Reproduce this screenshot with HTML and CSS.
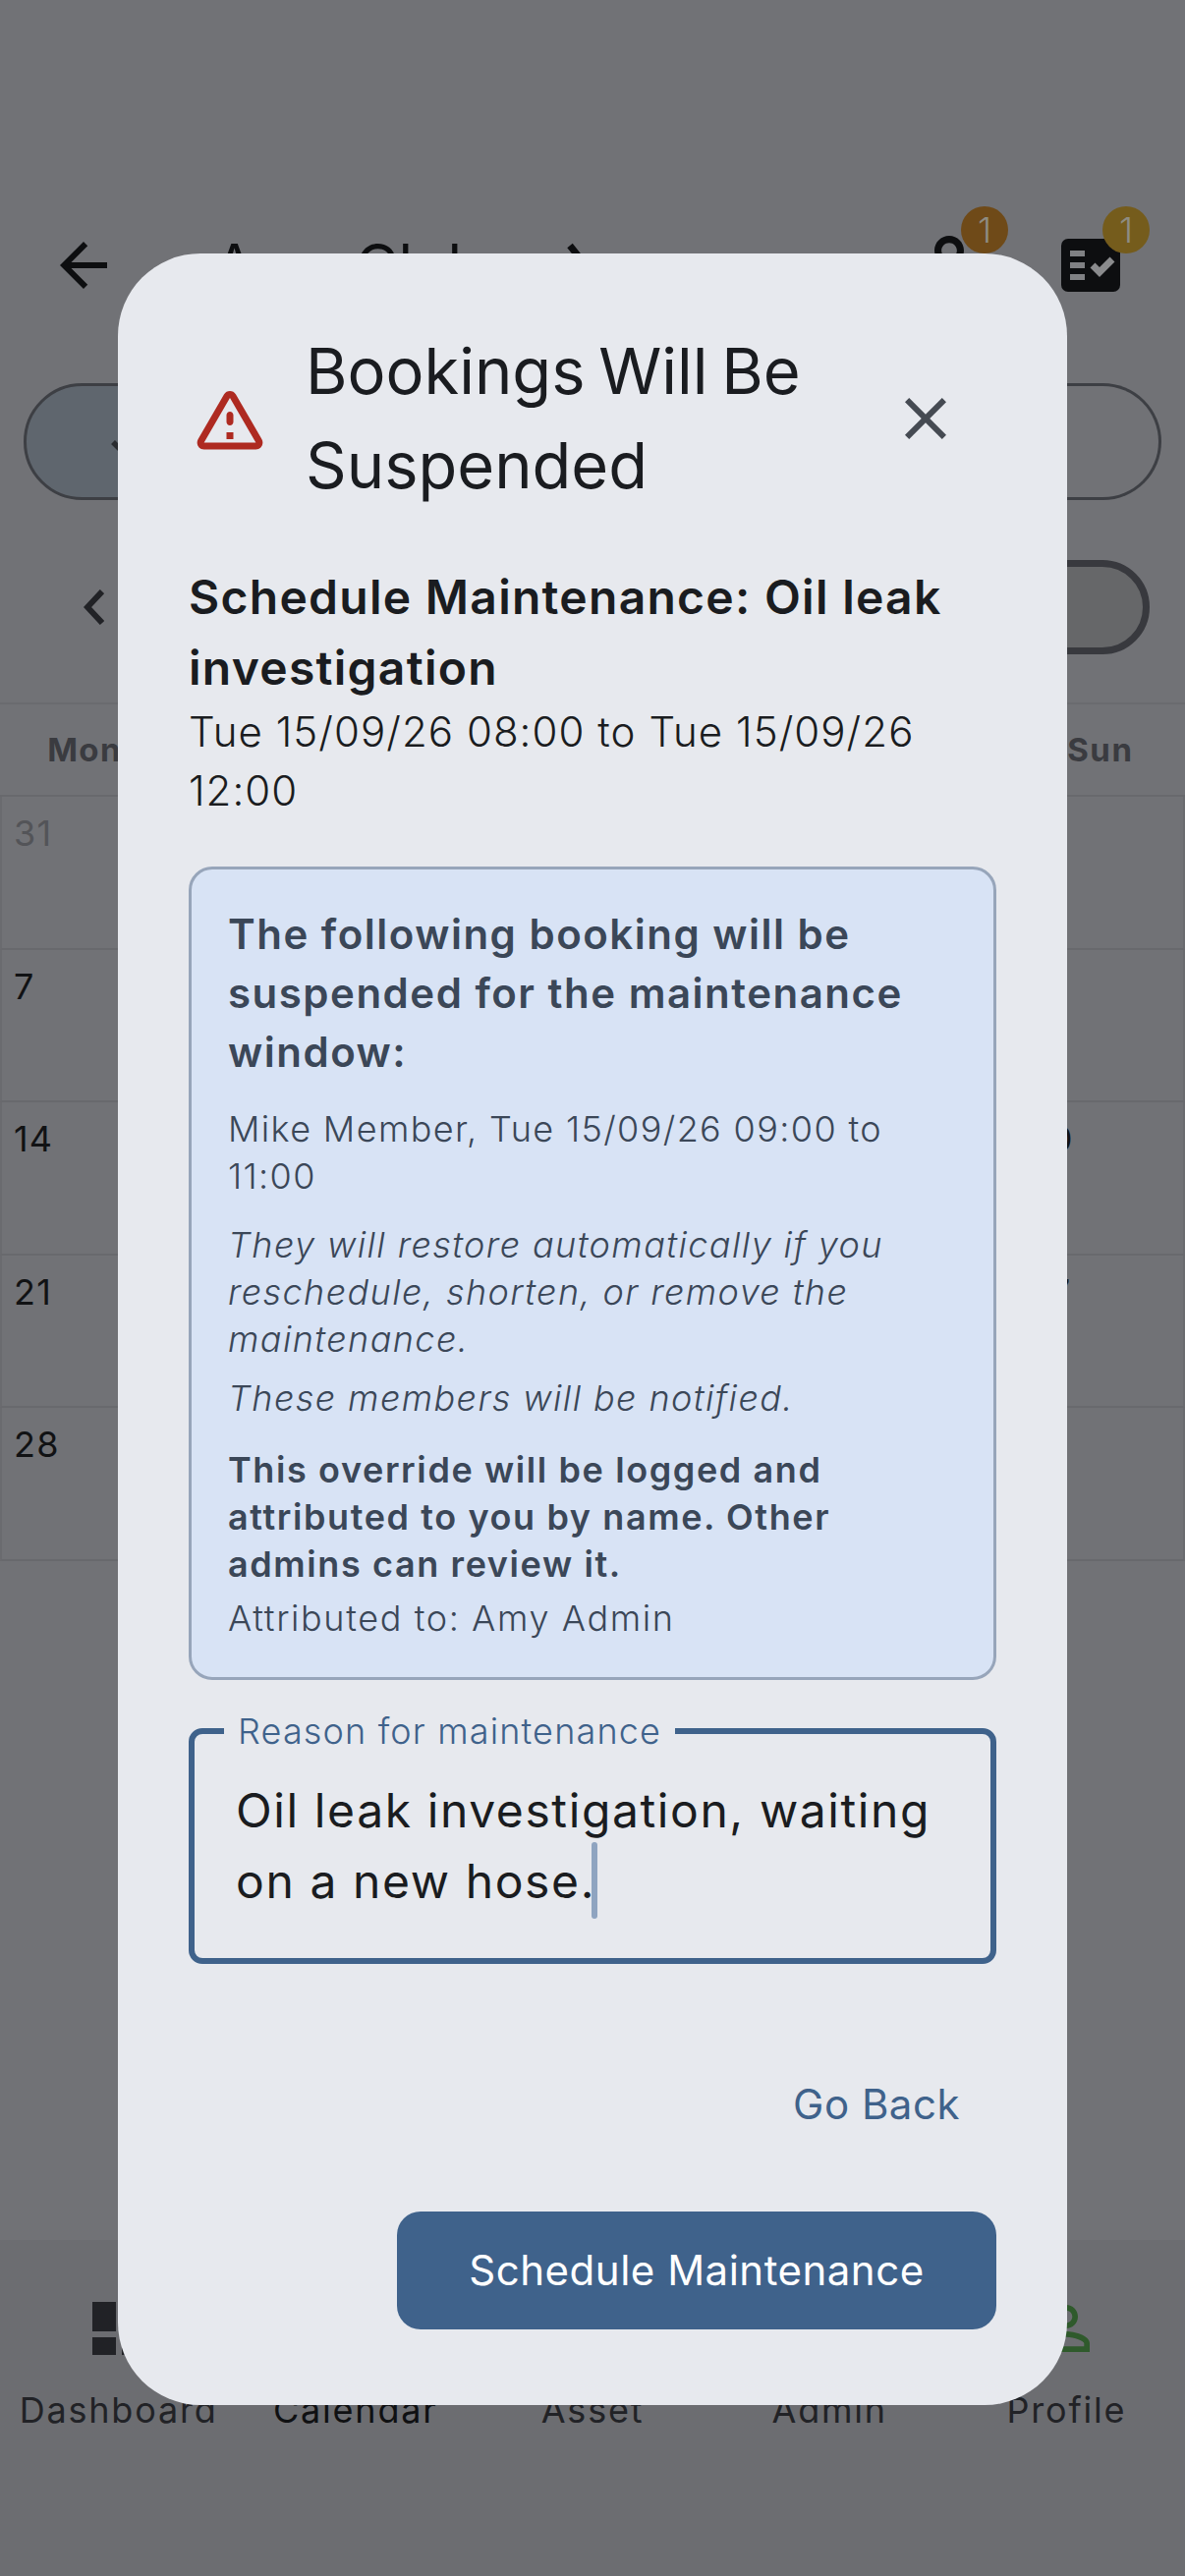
FILE: index.html
```html
<!DOCTYPE html>
<html lang="en">
<head>
    <meta charset="UTF-8">
    <meta name="viewport" content="width=device-width, initial-scale=1.0">
    <title>Bookings Will Be Suspended</title>
    <link rel="stylesheet" href="styles.css">
</head>
<body>
<div class="screen">
    <!-- page behind the dialog -->
    <div class="page">
        <header class="appbar">
            <svg class="icon back-icon" viewBox="0 0 24 24"><path d="M20 11H7.83l5.59-5.59L12 4l-8 8 8 8 1.41-1.41L7.83 13H20v-2z"/></svg>
            <div class="club-name">Amy Club</div>
            <svg class="club-chevron" viewBox="0 0 24 48"><path d="M4 4l16 20L4 44"/></svg>
            <div class="appbar-actions">
                <div class="action action-person">
                    <svg class="icon person-icon" viewBox="0 0 24 24"><path d="M12 5.9c1.16 0 2.1.94 2.1 2.1s-.94 2.1-2.1 2.1S9.9 9.16 9.9 8s.94-2.1 2.1-2.1m0 9c2.97 0 6.1 1.46 6.1 2.1v1.1H5.9V17c0-.64 3.13-2.1 6.1-2.1M12 4C9.79 4 8 5.79 8 8s1.79 4 4 4 4-1.79 4-4-1.79-4-4-4zm0 9c-2.67 0-8 1.34-8 4v3h16v-3c0-2.66-5.33-4-8-4z"/></svg>
                    <span class="badge badge-orange">1</span>
                </div>
                <div class="action action-tasks">
                    <svg class="tasks-icon" viewBox="0 0 60 54">
                        <rect class="tasks-bg" width="60" height="54" rx="7"/>
                        <rect class="tasks-bar" x="9" y="12" width="15" height="6"/>
                        <rect class="tasks-bar" x="9" y="24" width="15" height="6"/>
                        <rect class="tasks-bar" x="9" y="36" width="15" height="6"/>
                        <path class="tasks-check" d="M32 27l7 7 13-13"/>
                    </svg>
                    <span class="badge badge-yellow">1</span>
                </div>
            </div>
        </header>

        <div class="segments">
            <div class="segment segment-on"><svg class="segment-check" viewBox="0 0 24 24"><path d="M4 12l5 5L20 6"/></svg></div>
            <div class="segment segment-off"></div>
        </div>

        <div class="month-row">
            <svg class="month-prev" viewBox="0 0 21 36"><path d="M19 2L4 18l15 16"/></svg>
            <div class="today-pill"></div>
        </div>

        <div class="week-head">
            <div>Mon</div><div></div><div></div><div></div><div></div><div></div><div>Sun</div>
        </div>
        <!-- middle columns sit under the dialog -->
        <div class="days">
            <div class="day muted">31</div><div class="day"></div><div class="day"></div><div class="day"></div><div class="day"></div><div class="day"></div><div class="day"></div>
            <div class="day">7</div><div class="day"></div><div class="day"></div><div class="day"></div><div class="day"></div><div class="day"></div><div class="day"></div>
            <div class="day">14</div><div class="day"></div><div class="day"></div><div class="day"></div><div class="day"></div><div class="day"></div><div class="day">20</div>
            <div class="day">21</div><div class="day"></div><div class="day"></div><div class="day"></div><div class="day"></div><div class="day"></div><div class="day">27</div>
            <div class="day">28</div><div class="day"></div><div class="day"></div><div class="day"></div><div class="day"></div><div class="day"></div><div class="day"></div>
        </div>

        <nav class="bottom-nav">
            <div class="nav-item">
                <svg class="icon nav-icon" viewBox="0 0 24 24"><path d="M3 13h8V3H3v10zm0 8h8v-6H3v6zm10 0h8V11h-8v10zm0-18v6h8V3h-8z"/></svg>
                <span>Dashboard</span>
            </div>
            <div class="nav-item nav-current">
                <svg class="icon nav-icon" viewBox="0 0 24 24"><path d="M19 4h-1V2h-2v2H8V2H6v2H5a2 2 0 0 0-2 2v14a2 2 0 0 0 2 2h14a2 2 0 0 0 2-2V6a2 2 0 0 0-2-2zm0 16H5V10h14v10z"/></svg>
                <span>Calendar</span>
            </div>
            <div class="nav-item">
                <svg class="icon nav-icon" viewBox="0 0 24 24"><path d="M4 6h16v12H4z"/></svg>
                <span>Asset</span>
            </div>
            <div class="nav-item">
                <svg class="icon nav-icon" viewBox="0 0 24 24"><path d="M12 2L4 5v6c0 5 3.4 9.700 8 11 4.600-1.300 8-6 8-11V5z"/></svg>
                <span>Admin</span>
            </div>
            <div class="nav-item nav-profile">
                <svg class="icon nav-icon" viewBox="0 0 24 24"><path d="M12 5.900c1.160 0 2.100.94 2.100 2.100s-.94 2.100-2.100 2.100S9.900 9.160 9.900 8s.94-2.100 2.100-2.100m0 9c2.970 0 6.100 1.460 6.100 2.100v1.100H5.900V17c0-.64 3.130-2.100 6.100-2.100M12 4C9.790 4 8 5.790 8 8s1.790 4 4 4 4-1.790 4-4-1.790-4-4-4zm0 9c-2.670 0-8 1.340-8 4v3h16v-3c0-2.660-5.330-4-8-4z"/></svg>
                <span>Profile</span>
            </div>
        </nav>
    </div>

    <!-- dialog -->
    <div class="dialog">
        <div class="dialog-head">
            <svg class="warn-icon" viewBox="0 0 24 24"><path d="M12 5.990 19.530 19H4.470L12 5.990M2.740 18c-.77 1.330.19 3 1.730 3h15.060c1.540 0 2.500-1.670 1.730-3L13.730 4.990c-.77-1.330-2.690-1.330-3.460 0L2.740 18zM11 11v2c0 .55.45 1 1 1s1-.45 1-1v-2c0-.55-.45-1-1-1s-1 .45-1 1zm0 5h2v2h-2z"/></svg>
            <h2 class="dialog-title">Bookings Will Be Suspended</h2>
            <svg class="icon close-icon" viewBox="0 0 24 24"><path d="M19 6.410L17.590 5 12 10.590 6.410 5 5 6.410 10.590 12 5 17.590 6.410 19 12 13.410 17.590 19 19 17.590 13.410 12z"/></svg>
        </div>

        <h3 class="maint-title">Schedule Maintenance: Oil leak investigation</h3>
        <p class="maint-time">Tue 15/09/26 08:00 to Tue 15/09/26 12:00</p>

        <div class="info-box">
            <p class="info-lead">The following booking will be suspended for the maintenance window:</p>
            <p class="info-text info-booking">Mike Member, Tue 15/09/26 09:00 to 11:00</p>
            <p class="info-text info-italic info-restore">They will restore automatically if you reschedule, shorten, or remove the maintenance.</p>
            <p class="info-text info-italic info-notify">These members will be notified.</p>
            <p class="info-text info-strong">This override will be logged and attributed to you by name. Other admins can review it.</p>
            <p class="info-text info-attrib">Attributed to: Amy Admin</p>
        </div>

        <div class="reason-field">
            <span class="reason-label">Reason for maintenance</span>
            <div class="reason-value">Oil leak investigation, waiting on a new hose.<span class="caret"></span></div>
        </div>

        <div class="dialog-actions">
            <div class="btn-text">Go Back</div>
            <div class="btn-filled">Schedule Maintenance</div>
        </div>
    </div>
</div>
</body>
</html>
```

FILE: styles.css
```css
* {
    box-sizing: border-box;
}

html, body {
    margin: 0;
    padding: 0;
}

body {
    font-family: 'Inter', 'Liberation Sans', sans-serif;
    background: #717276;
}

p, h2, h3 {
    margin: 0;
    font-weight: 400;
}

.screen {
    position: relative;
    width: 1206px;
    height: 2622px;
    overflow: hidden;
    background: #717276;
}

.page {
    display: flex;
    flex-direction: column;
    height: 100%;
}

.icon {
    width: 72px;
    height: 72px;
    flex: none;
    fill: currentColor;
}

/* app bar */
.appbar {
    display: flex;
    align-items: center;
    height: 72px;
    margin-top: 234px;
    padding-left: 49px;
    color: #0d0e10;
}

.club-name {
    margin-left: 97px;
    font-size: 60px;
    line-height: 72px;
}

.club-chevron {
    width: 24px;
    height: 48px;
    margin-left: 84px;
    fill: none;
    stroke: #0d0e10;
    stroke-width: 7;
}

.appbar-actions {
    display: flex;
    align-items: center;
    margin-left: auto;
    margin-right: 66px;
}

.action {
    position: relative;
}

.action-person {
    width: 90px;
    height: 90px;
    margin-right: 69px;
}

.person-icon {
    width: 90px;
    height: 90px;
}

.action-tasks {
    width: 60px;
    height: 54px;
}

.tasks-icon {
    display: block;
    width: 60px;
    height: 54px;
}

.tasks-bg {
    fill: #0d0e10;
}

.tasks-bar {
    fill: #808184;
}

.tasks-check {
    fill: none;
    stroke: #8a8b8d;
    stroke-width: 7;
}

.badge {
    position: absolute;
    width: 48px;
    height: 48px;
    border-radius: 50%;
    color: #8e8c82;
    font-size: 36px;
    font-weight: 300;
    line-height: 48px;
    text-align: center;
}

.badge-orange {
    left: 57px;
    top: -15px;
    background: #6f4a18;
}

.badge-yellow {
    left: 42px;
    top: -33px;
    background: #755c1c;
}

/* filter pills */
.segments {
    display: flex;
    height: 119px;
    margin: 84px 24px 0;
}

.segment {
    flex: 1;
    border: 3px solid #3d3f44;
}

.segment-on {
    display: flex;
    align-items: center;
    padding-left: 78px;
    border-radius: 60px 0 0 60px;
    background: #5f666e;
}

.segment-off {
    border-left: 0;
    border-radius: 0 60px 60px 0;
}

.segment-check {
    width: 60px;
    height: 60px;
    fill: none;
    stroke: #2a2c30;
    stroke-width: 2.2;
}

.month-row {
    display: flex;
    align-items: center;
    height: 96px;
    margin: 61px 36px 0 85px;
}

.month-prev {
    width: 21px;
    height: 36px;
    fill: none;
    stroke: #212226;
    stroke-width: 6;
}

.today-pill {
    width: 450px;
    height: 96px;
    margin-left: auto;
    border: 7px solid #38393e;
    border-radius: 48px;
    background: #666769;
}

/* calendar */
.week-head {
    display: grid;
    grid-template-columns: repeat(7, 1fr);
    height: 96px;
    margin-top: 49px;
    border-top: 2px solid #6a6b6f;
    border-bottom: 2px solid #68696d;
    color: #3a3b40;
    font-size: 33px;
    font-weight: 700;
    letter-spacing: 1.5px;
    line-height: 92px;
    text-align: center;
}

.days {
    display: grid;
    grid-template-columns: repeat(7, 1fr);
    grid-auto-rows: 155.6px;
}

.day {
    padding: 13px 0 0 12px;
    border-right: 2px solid #6a6b6f;
    border-bottom: 2px solid #68696d;
    color: #111214;
    font-size: 36px;
    letter-spacing: 1.2px;
    line-height: 48px;
}

.day:nth-child(7n+1) {
    border-left: 2px solid #6a6b6f;
}

.day.muted {
    color: #535458;
}

/* bottom navigation */
.bottom-nav {
    display: flex;
    height: 342px;
    margin-top: auto;
    padding-top: 54px;
    background: #6c6d71;
}

.nav-item {
    display: flex;
    flex: 1;
    flex-direction: column;
    align-items: center;
    gap: 23px;
    color: #212226;
    font-size: 36px;
    letter-spacing: 1.8px;
    line-height: 48px;
}

.nav-current {
    color: #0f1012;
}

.nav-profile .nav-icon {
    color: #2f5a2c;
}

/* dialog */
.dialog {
    position: absolute;
    left: 120px;
    top: 258px;
    width: 966px;
    height: 2190px;
    padding: 72px 72px 0;
    border-radius: 84px;
    background: #e7e9ee;
    color: #1a1c20;
}

.dialog-head {
    display: flex;
    align-items: center;
}

.warn-icon {
    width: 84px;
    height: 84px;
    flex: none;
    fill: #ae2a21;
}

.dialog-title {
    flex: 1;
    margin-left: 35px;
    font-size: 65px;
    word-spacing: -4.5px;
    line-height: 96px;
}

.close-icon {
    margin-right: 36px;
    color: #454a52;
}

.maint-title {
    margin-top: 50px;
    font-size: 48px;
    font-weight: 600;
    letter-spacing: 1.27px;
    line-height: 72px;
}

.maint-time {
    margin-top: -1.5px;
    font-size: 42px;
    font-weight: 350;
    letter-spacing: 1.05px;
    line-height: 60px;
}

.info-box {
    margin-top: 47.5px;
    padding: 36px 36px 36px 37px;
    border: 3px solid #97a5ba;
    border-radius: 24px;
    background: #d8e3f5;
    color: #3b4758;
}

.info-lead {
    font-size: 42px;
    font-weight: 600;
    letter-spacing: 1.5px;
    line-height: 60px;
}

.info-text {
    font-size: 36px;
    font-weight: 350;
    letter-spacing: 1.37px;
    line-height: 48px;
}

.info-booking {
    margin-top: 24px;
}

.info-italic {
    font-style: italic;
    font-weight: 300;
    letter-spacing: 1.4px;
}

.info-restore {
    margin-top: 22px;
}

.info-notify {
    margin-top: 12px;
}

.info-strong {
    margin-top: 25px;
    font-weight: 600;
    letter-spacing: 1.6px;
}

.info-attrib {
    margin-top: 7px;
    letter-spacing: 1.6px;
}

.reason-field {
    position: relative;
    height: 240px;
    margin-top: 49px;
    padding: 42px 42px 0;
    border: 6px solid #3f628b;
    border-radius: 14px;
}

.reason-label {
    position: absolute;
    left: 30px;
    top: -27px;
    padding: 0 14px;
    background: #e7e9ee;
    color: #3f628b;
    font-size: 36px;
    font-weight: 350;
    letter-spacing: 1.15px;
    line-height: 48px;
}

.reason-value {
    font-size: 48px;
    font-weight: 375;
    letter-spacing: 1.6px;
    line-height: 72px;
}

.caret {
    position: absolute;
    width: 6px;
    height: 78px;
    margin-top: -4px;
    margin-left: -4px;
    border-radius: 3px;
    background: #8fa4c0;
}

.dialog-actions {
    display: flex;
    flex-direction: column;
    align-items: flex-end;
}

.btn-text {
    margin-top: 113px;
    margin-right: 37px;
    color: #3f628b;
    font-size: 42px;
    font-weight: 420;
    letter-spacing: .5px;
    line-height: 60px;
}

.btn-filled {
    width: 610px;
    height: 120px;
    margin-top: 79px;
    border-radius: 24px;
    background: #3f628b;
    color: #fff;
    font-size: 42px;
    font-weight: 420;
    letter-spacing: .5px;
    line-height: 120px;
    text-align: center;
}
```
